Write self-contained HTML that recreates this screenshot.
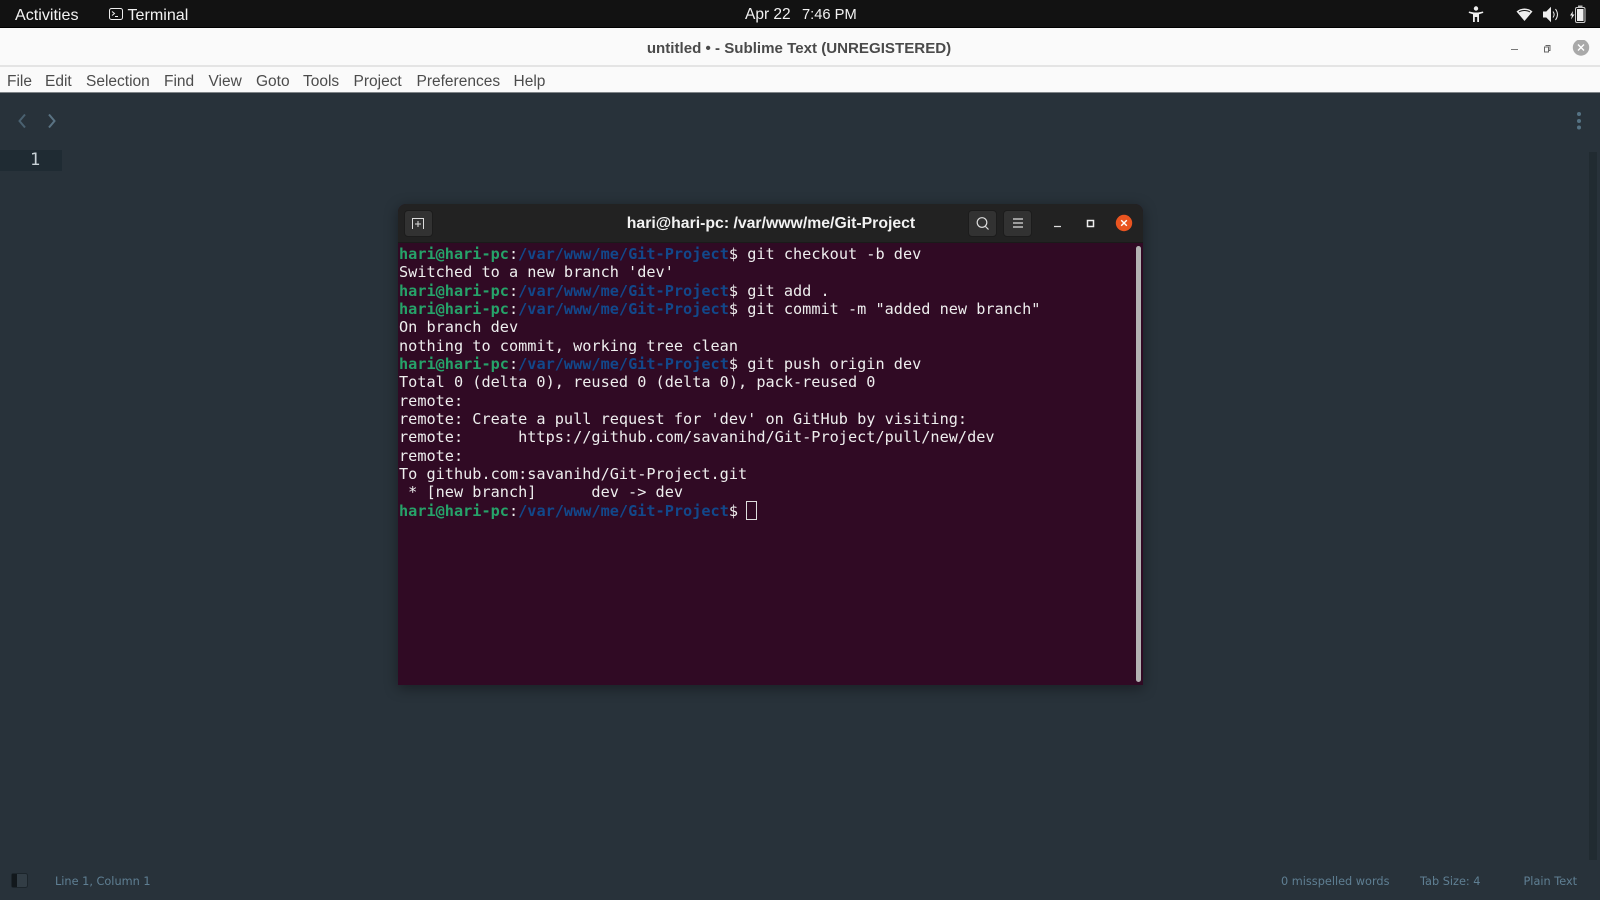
<!DOCTYPE html>
<html lang="en"><head><meta charset="utf-8"><title>Sublime Text</title>
<style>
*{margin:0;padding:0;box-sizing:border-box}
html,body{width:1600px;height:900px;overflow:hidden;background:#28323a;font-family:"Liberation Sans",sans-serif}
.a{position:absolute;white-space:pre}
#top{left:0;top:0;width:1600px;height:28px;background:#121212;border-bottom:1px solid #000}
#top .a{color:#f2f2f2;font-size:16.100px;top:6px}
#tb{left:0;top:28px;width:1600px;height:39px;background:#fafafa;border-bottom:2px solid #e4e4e4}
#title{left:-1px;width:1600px;top:11.500px;text-align:center;font-weight:700;font-size:15.100px;color:#4a4a4a}
#mb{left:0;top:67px;width:1600px;height:26px;background:#fafafa;border-bottom:1px solid #7f8488}
#mb .a{top:5.500px;font-size:15.500px;color:#4c4c4c}
#gl{left:0;top:150px;width:62px;height:21px;background:#1f2b33}
#gn{left:30px;top:150px;font:17px/21px "DejaVu Sans Mono",monospace;color:#c9d3d8}
#sb{left:1589px;top:152px;width:8px;height:708px;background:#212b31}
.st{top:874px;font:11.300px/16px "DejaVu Sans",sans-serif;color:#5f7f93}
#term{left:398px;top:204px;width:745px;height:481px;background:#300a24;border-radius:8px 8px 0 0;box-shadow:0 3px 14px rgba(0,0,0,.4);overflow:hidden}
#th{left:0;top:0;width:745px;height:39px;background:#222;border-bottom:1px solid #1a1a1a}
#tt{left:0;top:11px;width:746px;text-align:center;font-weight:700;font-size:15.800px;line-height:18px;color:#f2f2f2}
.btn{top:6px;width:29px;height:27px;background:#323232;border:1px solid #1c1c1c;border-radius:4px}
#out{left:1px;top:41px;font:15.220px/18.350px "DejaVu Sans Mono",monospace;color:#eee}
.g{color:#26a269;font-weight:700}.b{color:#12488b;font-weight:700}
#scr{left:738px;top:42px;width:5px;height:436px;background:#b3b3b3;border-radius:3px}
#cur{left:348px;top:297px;width:11px;height:19px;border:1px solid #ddd}
</style></head><body>
<div class="a" id="top">
<span class="a" style="left:15px">Activities</span>
<svg class="a" style="left:109px;top:8px" width="14" height="13" viewBox="0 0 14 13" fill="none" stroke="#eee"><rect x=".5" y=".5" width="13" height="11" rx="2"/><path d="M3 3.500l2.500 2L3 7.500M6 8.500h3"/></svg>
<span class="a" style="left:127.500px">Terminal</span>
<span class="a" style="left:745px;font-size:15.500px;top:6px">Apr 22</span>
<span class="a" style="left:802px;font-size:14.700px;top:6.500px">7:46 PM</span>
<svg class="a" style="left:1468px;top:6px" width="16" height="17" viewBox="0 0 16 17" fill="#eee"><circle cx="8" cy="2.500" r="2.200"/><path d="M1 5.500l5 1h4l5-1 .3 1.400-4.300 1.300V16H9.200v-5H6.800v5H5V8.200L.7 6.900z"/></svg>
<svg class="a" style="left:1516px;top:7px" width="17" height="15" viewBox="0 0 17 15"><path d="M.5 4.500C5 .5 12 .5 16.500 4.500L8.500 14z" fill="#eee"/><path d="M3 5C6 3 11 3 14 5" stroke="#121212" fill="none"/></svg>
<svg class="a" style="left:1543px;top:6px" width="17" height="17" viewBox="0 0 17 17" fill="none" stroke="#eee"><path d="M.5 6h3l4-4v13l-4-4h-3z" fill="#eee"/><path d="M10 5.500c1.500 2 1.500 4 0 6M12.500 3c2.500 3.500 2.500 7.500 0 11"/></svg>
<svg class="a" style="left:1569px;top:5px" width="17" height="18" viewBox="0 0 17 18" fill="none"><path d="M4 6L1 10.500h2L2 14.500 5.500 9.500H3.500z" fill="#eee"/><rect x="6.500" y="2.500" width="9.500" height="15" rx="1.500" stroke="#ccc"/><rect x="9" y=".5" width="4.500" height="2" fill="#bbb"/><rect x="8" y="4" width="6.500" height="12" fill="#eee"/></svg>
</div>
<div class="a" id="tb"><div class="a" id="title">untitled • - Sublime Text (UNREGISTERED)</div>
<svg class="a" style="left:1505px;top:12px" width="90" height="24" viewBox="0 0 90 24" fill="none"><path d="M6 9.500h7" stroke="#777"/><path d="M40.500 5.500h4.500v5h-1M39.500 7h4v5h-4z" stroke="#666"/><circle cx="76" cy="7.500" r="8.200" fill="#a9a9a9"/><path d="M73 4.500l6 6M79 4.500l-6 6" stroke="#fff" stroke-width="1.400"/></svg>
</div>
<div class="a" id="mb">
<span class="a" style="left:7px">File</span><span class="a" style="left:45px">Edit</span><span class="a" style="left:86px">Selection</span><span class="a" style="left:164px">Find</span><span class="a" style="left:208.500px">View</span><span class="a" style="left:256px">Goto</span><span class="a" style="left:303px">Tools</span><span class="a" style="left:353.500px">Project</span><span class="a" style="left:416.500px">Preferences</span><span class="a" style="left:513.500px">Help</span>
</div>
<svg class="a" style="left:16px;top:113px" width="50" height="16" viewBox="0 0 50 16" fill="none" stroke-width="2"><path d="M9 1.500L3.500 8 9 14.500" stroke="#4a6170"/><path d="M33 1.500L38.500 8 33 14.500" stroke="#5a7383"/></svg>
<svg class="a" style="left:1576px;top:111px" width="6" height="20" viewBox="0 0 6 20" fill="#557284"><circle cx="3" cy="3" r="2"/><circle cx="3" cy="10" r="2"/><circle cx="3" cy="16.500" r="2"/></svg>
<div class="a" id="gl"></div><div class="a" id="gn">1</div>
<div class="a" id="sb"></div>
<svg class="a" style="left:11px;top:873px" width="17" height="15" viewBox="0 0 17 15"><rect x=".5" y=".5" width="16" height="14" rx="2" fill="#323d45" stroke="#1c252b"/><rect x="1" y="1" width="5" height="13" fill="#12181c"/></svg>
<span class="a st" style="left:55px">Line 1, Column 1</span>
<span class="a st" style="left:1281px">0 misspelled words</span>
<span class="a st" style="left:1420px">Tab Size: 4</span>
<span class="a st" style="left:1523.500px">Plain Text</span>
<div class="a" id="term">
<div class="a" id="th">
<div class="a btn" style="left:6px"></div>
<svg class="a" style="left:13px;top:12px" width="15" height="15" viewBox="0 0 15 15" fill="none" stroke="#ddd"><path d="M1.500 13V2.500h11V13M7 5v6M4 8h6"/></svg>
<div class="a" id="tt">hari@hari-pc: /var/www/me/Git-Project</div>
<div class="a btn" style="left:570px"></div>
<svg class="a" style="left:577px;top:12px" width="15" height="15" viewBox="0 0 15 15" fill="none" stroke="#ddd" stroke-width="1.200"><circle cx="7" cy="6.500" r="4.800"/><path d="M10.500 10.500l3 3"/></svg>
<div class="a btn" style="left:605px"></div>
<svg class="a" style="left:614px;top:13px" width="12" height="12" viewBox="0 0 12 12" stroke="#ddd" stroke-width="1.200"><path d="M1 2h10M1 6h10M1 10h10"/></svg>
<svg class="a" style="left:651px;top:15px" width="90" height="18" viewBox="0 0 90 18" fill="none"><path d="M5 7.500h7" stroke="#ddd" stroke-width="1.200"/><rect x="38.500" y="1.500" width="6" height="6" stroke="#eee" stroke-width="1.500"/></svg>
<svg class="a" style="left:717px;top:10px" width="18" height="18" viewBox="0 0 18 18"><circle cx="9" cy="9" r="8.200" fill="#e95420"/><path d="M6.200 6.200l5.600 5.600M11.800 6.200l-5.600 5.600" stroke="#fff" stroke-width="1.400"/></svg>
</div>
<pre class="a" id="out"><span class="g">hari@hari-pc</span>:<span class="b">/var/www/me/Git-Project</span>$ git checkout -b dev
Switched to a new branch 'dev'
<span class="g">hari@hari-pc</span>:<span class="b">/var/www/me/Git-Project</span>$ git add .
<span class="g">hari@hari-pc</span>:<span class="b">/var/www/me/Git-Project</span>$ git commit -m "added new branch"
On branch dev
nothing to commit, working tree clean
<span class="g">hari@hari-pc</span>:<span class="b">/var/www/me/Git-Project</span>$ git push origin dev
Total 0 (delta 0), reused 0 (delta 0), pack-reused 0
remote: 
remote: Create a pull request for 'dev' on GitHub by visiting:
remote:      https://github.com/savanihd/Git-Project/pull/new/dev
remote: 
To github.com:savanihd/Git-Project.git
 * [new branch]      dev -&gt; dev
<span class="g">hari@hari-pc</span>:<span class="b">/var/www/me/Git-Project</span>$ </pre>
<div class="a" id="cur"></div>
<div class="a" id="scr"></div>
</div>
</body></html>
